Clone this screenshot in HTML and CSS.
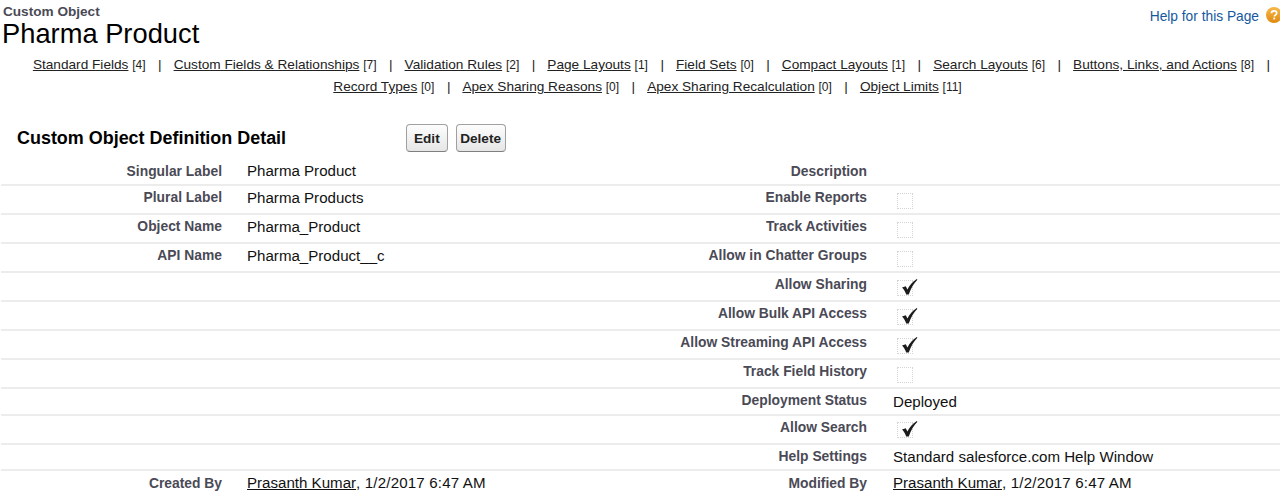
FILE: index.html
```html
<!DOCTYPE html>
<html lang="en">
<head>
<meta charset="utf-8">
<title>Pharma Product</title>
<link rel="stylesheet" href="styles.css">
</head>
<body>
<header class="page-head">
  <div class="titles">
    <div class="eyebrow">Custom Object</div>
    <h1 class="title">Pharma Product</h1>
  </div>
  <a class="help" href="#">Help for this Page
    <svg class="help-icon" width="16" height="16" viewBox="0 0 16 16" aria-hidden="true">
      <defs><linearGradient id="hg" x1="0" y1="0" x2="0" y2="1"><stop offset="0" stop-color="#f7b84a"/><stop offset="1" stop-color="#e08a10"/></linearGradient></defs>
      <circle cx="8" cy="8" r="8" fill="url(#hg)"/>
      <path d="M5.4 6.2C5.5 4.6 6.6 3.8 8.1 3.8c1.5 0 2.6.9 2.6 2.2 0 1.1-.7 1.6-1.4 2.1-.6.4-.9.7-.9 1.4" fill="none" stroke="#fff" stroke-width="1.7"/>
      <rect x="7.3" y="10.6" width="1.8" height="1.8" fill="#fff"/>
    </svg>
  </a>
</header>
<nav class="links">
  <span class="link-row top"><a href="#">Standard Fields</a> <span class="count">[4]</span><span class="sep">|</span><a href="#">Custom Fields &amp; Relationships</a> <span class="count">[7]</span><span class="sep">|</span><a href="#">Validation Rules</a> <span class="count">[2]</span><span class="sep">|</span><a href="#">Page Layouts</a> <span class="count">[1]</span><span class="sep">|</span><a href="#">Field Sets</a> <span class="count">[0]</span><span class="sep">|</span><a href="#">Compact Layouts</a> <span class="count">[1]</span><span class="sep">|</span><a href="#">Search Layouts</a> <span class="count">[6]</span><span class="sep">|</span><a href="#">Buttons, Links, and Actions</a> <span class="count">[8]</span><span class="sep last">|</span></span>
  <span class="link-row"><a href="#">Record Types</a> <span class="count">[0]</span><span class="sep">|</span><a href="#">Apex Sharing Reasons</a> <span class="count">[0]</span><span class="sep">|</span><a href="#">Apex Sharing Recalculation</a> <span class="count">[0]</span><span class="sep">|</span><a href="#">Object Limits</a> <span class="count">[11]</span></span>
</nav>
<section class="detail">
  <div class="detail-head">
    <h2 class="detail-title">Custom Object Definition Detail</h2>
    <div class="buttons"><button class="btn edit" type="button">Edit</button><button class="btn" type="button">Delete</button></div>
  </div>
  <div class="row first"><div class="label">Singular Label</div><div class="value">Pharma Product</div><div class="label">Description</div><div class="value"></div></div>
  <div class="row"><div class="label">Plural Label</div><div class="value">Pharma Products</div><div class="label">Enable Reports</div><div class="value"><span class="box"></span></div></div>
  <div class="row"><div class="label">Object Name</div><div class="value">Pharma_Product</div><div class="label">Track Activities</div><div class="value"><span class="box"></span></div></div>
  <div class="row"><div class="label">API Name</div><div class="value">Pharma_Product__c</div><div class="label">Allow in Chatter Groups</div><div class="value"><span class="box"></span></div></div>
  <div class="row"><div class="label"></div><div class="value"></div><div class="label">Allow Sharing</div><div class="value"><span class="box"><svg class="tick" width="20" height="20" viewBox="0 0 20 20" aria-hidden="true"><path d="M3 10.500 6.800 9.300 8.400 12.600C10.500 8.400 13.400 4.800 17.800 2L18.400 2.700C14.800 6.400 12 11 9.800 17.400L7.200 17.500C6.300 14.900 5 12.300 3 10.500Z" fill="#1c1c1c"/></svg></span></div></div>
  <div class="row"><div class="label"></div><div class="value"></div><div class="label">Allow Bulk API Access</div><div class="value"><span class="box"><svg class="tick" width="20" height="20" viewBox="0 0 20 20" aria-hidden="true"><path d="M3 10.500 6.800 9.300 8.400 12.600C10.500 8.400 13.400 4.800 17.800 2L18.400 2.700C14.800 6.400 12 11 9.800 17.400L7.200 17.500C6.300 14.900 5 12.300 3 10.500Z" fill="#1c1c1c"/></svg></span></div></div>
  <div class="row"><div class="label"></div><div class="value"></div><div class="label">Allow Streaming API Access</div><div class="value"><span class="box"><svg class="tick" width="20" height="20" viewBox="0 0 20 20" aria-hidden="true"><path d="M3 10.500 6.800 9.300 8.400 12.600C10.500 8.400 13.400 4.800 17.800 2L18.400 2.700C14.800 6.400 12 11 9.800 17.400L7.200 17.500C6.300 14.900 5 12.300 3 10.500Z" fill="#1c1c1c"/></svg></span></div></div>
  <div class="row"><div class="label"></div><div class="value"></div><div class="label">Track Field History</div><div class="value"><span class="box"></span></div></div>
  <div class="row short"><div class="label"></div><div class="value"></div><div class="label">Deployment Status</div><div class="value">Deployed</div></div>
  <div class="row"><div class="label"></div><div class="value"></div><div class="label">Allow Search</div><div class="value"><span class="box tight"><svg class="tick" width="20" height="20" viewBox="0 0 20 20" aria-hidden="true"><path d="M3 10.500 6.800 9.300 8.400 12.600C10.500 8.400 13.400 4.800 17.800 2L18.400 2.700C14.800 6.400 12 11 9.800 17.400L7.200 17.500C6.300 14.900 5 12.300 3 10.500Z" fill="#1c1c1c"/></svg></span></div></div>
  <div class="row shorter"><div class="label"></div><div class="value"></div><div class="label">Help Settings</div><div class="value">Standard salesforce.com Help Window</div></div>
  <div class="row last"><div class="label">Created By</div><div class="value"><a href="#">Prasanth Kumar</a><span class="when">, 1/2/2017 6:47 AM</span></div><div class="label">Modified By</div><div class="value"><a href="#">Prasanth Kumar</a><span class="when">, 1/2/2017 6:47 AM</span></div></div>
</section>
</body>
</html>
```
FILE: styles.css
```css
html, body { margin: 0; padding: 0; background: #fff; }
body { width: 1280px; height: 498px; overflow: hidden; font-family: "Liberation Sans", Arial, sans-serif; color: #000; }
a { color: inherit; }

.page-head { display: flex; justify-content: space-between; align-items: flex-start; padding: 4px 0 0 2px; height: 49px; box-sizing: border-box; }
.eyebrow { padding-left: 1px; font-size: 13.600px; font-weight: bold; line-height: 15px; color: #4a4a56; }
.title { margin: 0; font-size: 27.300px; font-weight: normal; line-height: 30px; }
.help { display: flex; align-items: flex-start; gap: 7px; margin: 5px -2px 0 0; color: #15589e; font-size: 13.750px; line-height: 16px; text-decoration: none; }
.help-icon { margin-top: -2px; }

.links { display: flex; flex-direction: column; align-items: center; height: 75px; padding: 5px 0 0 15px; box-sizing: border-box; font-size: 13.650px; line-height: 22px; color: #222; }
.link-row { display: block; height: 22px; white-space: nowrap; }
.link-row.top { margin-left: 8px; }
.links a { color: #222; }
.count { font-size: 12px; }
.sep { margin: 0 12px 0 12.500px; color: #222; }
.sep.last { margin-right: 0; }

.detail-head { display: flex; align-items: center; height: 38px; padding-left: 17px; margin-top: -5px; }
.detail-title { margin: 0; width: 389px; font-size: 17.950px; font-weight: bold; line-height: 22px; }
.buttons { display: flex; gap: 8px; }
.btn { height: 28px; padding: 0 3.500px; border: 1px solid #a0a0a0; border-bottom-color: #7f7f7f; border-radius: 4px; background: linear-gradient(#fdfdfd, #e6e6e6); font-family: inherit; font-size: 13.600px; font-weight: bold; color: #222; }
.btn.edit { padding: 0 7px; }

.row { display: grid; grid-template-columns: 221px 220px 425px 1fr; margin-left: 1px; height: 29px; box-sizing: border-box; border-bottom: 2px solid #ececec; font-size: 15.100px; }
.row.short { height: 27px; }
.row.shorter { height: 26px; }
.row.last { border-bottom: 0; height: 27px; }
.label { padding-top: 3px; text-align: right; font-size: 13.850px; font-weight: bold; line-height: 16px; color: #4a4a56; }
.value { padding: 3px 0 0 25px; line-height: 17px; color: #111; white-space: nowrap; }
.row.first .label { padding-top: 6px; }
.row.first .value { padding-top: 5px; }
.row.short .value { padding-top: 4px; }
.row.last .label { padding-top: 4px; }
.row.last .value { padding-top: 3px; }
.row .value:last-child { padding-left: 26px; }
.value a { color: #111; }
.when { letter-spacing: 0.170px; }
.box { display: block; position: relative; width: 14px; height: 14px; margin: 4px 0 0 4px; border: 1px dotted #d4d4d4; }
.box.tight { margin-top: 3px; }
.tick { position: absolute; left: 1px; top: -4px; }
```
